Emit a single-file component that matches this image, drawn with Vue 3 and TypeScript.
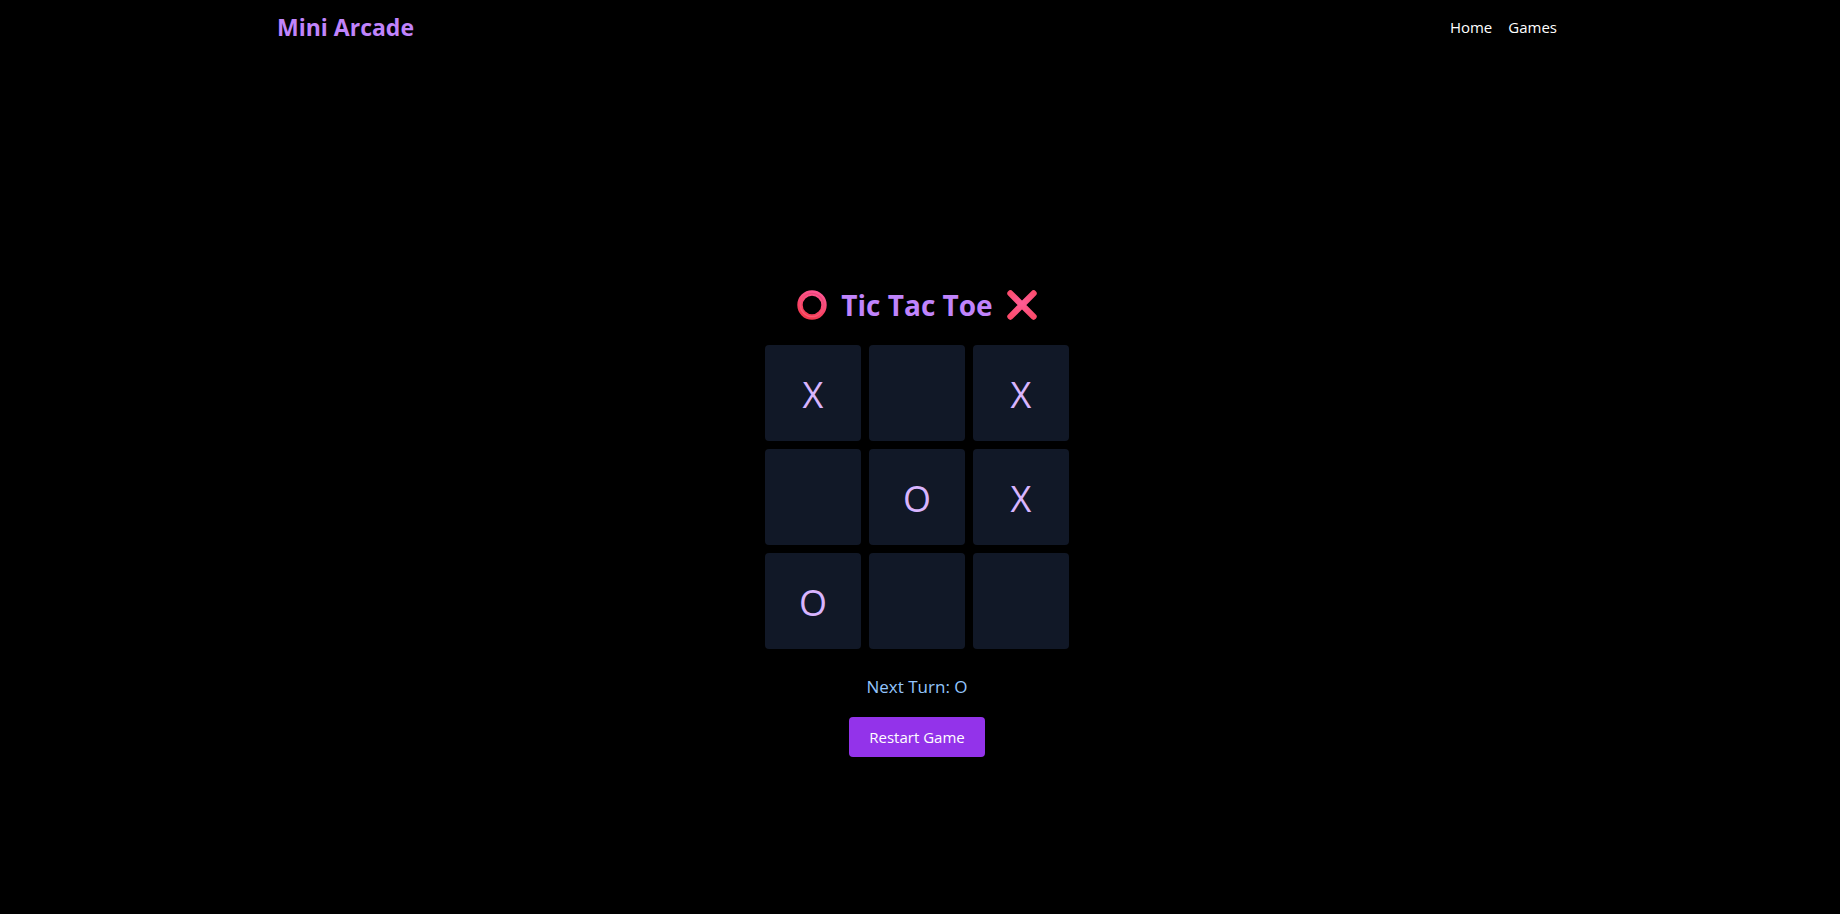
<script setup lang="ts">
import { computed, ref } from 'vue'

type Mark = 'X' | 'O' | ''

const links = [
  { label: 'Home', href: '#home' },
  { label: 'Games', href: '#games' },
]

const lines = [
  [0, 1, 2], [3, 4, 5], [6, 7, 8],
  [0, 3, 6], [1, 4, 7], [2, 5, 8],
  [0, 4, 8], [2, 4, 6],
]

const cells = ref<Mark[]>(['X', '', 'X', '', 'O', 'X', 'O', '', ''])
const turn = ref<'X' | 'O'>('O')

const winner = computed<Mark>(() => {
  for (const [a, b, c] of lines) {
    const mark = cells.value[a]
    if (mark && mark === cells.value[b] && mark === cells.value[c]) return mark
  }
  return ''
})

const status = computed(() => {
  if (winner.value) return `Winner: ${winner.value}`
  if (cells.value.every(Boolean)) return 'Draw'
  return `Next Turn: ${turn.value}`
})

function play(index: number) {
  if (cells.value[index] || winner.value) return
  cells.value[index] = turn.value
  turn.value = turn.value === 'X' ? 'O' : 'X'
}

function restart() {
  cells.value = Array<Mark>(9).fill('')
  turn.value = 'X'
}
</script>

<template>
  <div class="page">
    <header class="header">
      <div class="bar">
        <a class="brand" href="#home">Mini Arcade</a>
        <nav class="nav">
          <a v-for="link in links" :key="link.label" :href="link.href">{{ link.label }}</a>
        </nav>
      </div>
    </header>

    <main class="game">
      <h1 class="title">
        <svg class="mark" viewBox="0 0 30 30" aria-hidden="true">
          <defs>
            <linearGradient id="ring" x1="0.7" y1="0" x2="0.3" y2="1">
              <stop offset="0" stop-color="#ff5590" />
              <stop offset="1" stop-color="#f4394f" />
            </linearGradient>
            <linearGradient id="ring-inner" x1="0.7" y1="0" x2="0.3" y2="1">
              <stop offset="0" stop-color="#e8457c" />
              <stop offset="1" stop-color="#fb5a70" />
            </linearGradient>
          </defs>
          <circle cx="15" cy="15" r="12" fill="none" stroke="url(#ring)" stroke-width="5.4" />
          <circle cx="15" cy="15" r="11.6" fill="none" stroke="url(#ring-inner)" stroke-width="1.4" />
        </svg>
        <span>Tic Tac Toe</span>
        <svg class="mark" viewBox="0 0 30 30" aria-hidden="true">
          <defs>
            <radialGradient id="cross" gradientUnits="userSpaceOnUse" cx="15" cy="13" r="18">
              <stop offset="0" stop-color="#ff5c96" />
              <stop offset="1" stop-color="#fb4b6b" />
            </radialGradient>
          </defs>
          <path d="M3.4 3.4 26.6 26.6M26.6 3.4 3.4 26.6" stroke="url(#cross)" stroke-width="6.2" stroke-linecap="round" />
        </svg>
      </h1>

      <div class="board">
        <button
          v-for="(cell, index) in cells"
          :key="index"
          class="cell"
          type="button"
          :aria-label="`Square ${index + 1} ${cell || 'empty'}`"
          @click="play(index)"
        >{{ cell }}</button>
      </div>

      <p class="status" role="status">{{ status }}</p>
      <button class="restart" type="button" @click="restart">Restart Game</button>
    </main>
  </div>
</template>

<style>
body {
  margin: 0;
  background: #000;
}
</style>

<style scoped>
.page {
  display: flex;
  flex-direction: column;
  box-sizing: border-box;
  min-height: 100vh;
  padding-right: 6px;
  background: #000;
  color: #fff;
  font-family: 'Segoe UI', 'Open Sans', sans-serif;
  font-size: 15px;
  line-height: 24px;
}

.header {
  padding: 11px 24px 13px;
}

.bar {
  display: flex;
  align-items: center;
  justify-content: space-between;
  max-width: 1280px;
  margin: 0 auto;
}

.brand {
  color: #c084fc;
  font-size: 23px;
  font-weight: 700;
  line-height: 32px;
  text-decoration: none;
}

.nav {
  display: flex;
  gap: 16px;
}

.nav a {
  color: #fff;
  text-decoration: none;
}

.game {
  display: flex;
  flex: 1;
  flex-direction: column;
  align-items: center;
  justify-content: center;
  padding-top: 72px;
}

.title {
  display: flex;
  align-items: center;
  gap: 14px;
  margin: 0;
  padding: 2px 0 22px;
  color: #c084fc;
  font-size: 28px;
  font-weight: 700;
  line-height: 36px;
}

.mark {
  width: 30px;
  height: 30px;
}

.board {
  display: grid;
  grid-template-columns: repeat(3, 96px);
  grid-auto-rows: 96px;
  gap: 8px;
}

.cell {
  padding: 4px 0 0;
  border: 0;
  border-radius: 4px;
  background: #111827;
  color: #d8b4fe;
  font: inherit;
  font-size: 36px;
  line-height: 40px;
  cursor: pointer;
}

.status {
  margin: 24px 0 16px;
  color: #93c5fd;
  font-size: 17px;
  line-height: 28px;
}

.restart {
  padding: 8px 20px;
  border: 0;
  border-radius: 4px;
  background: #9333ea;
  color: #fff;
  font: inherit;
  cursor: pointer;
}
</style>
